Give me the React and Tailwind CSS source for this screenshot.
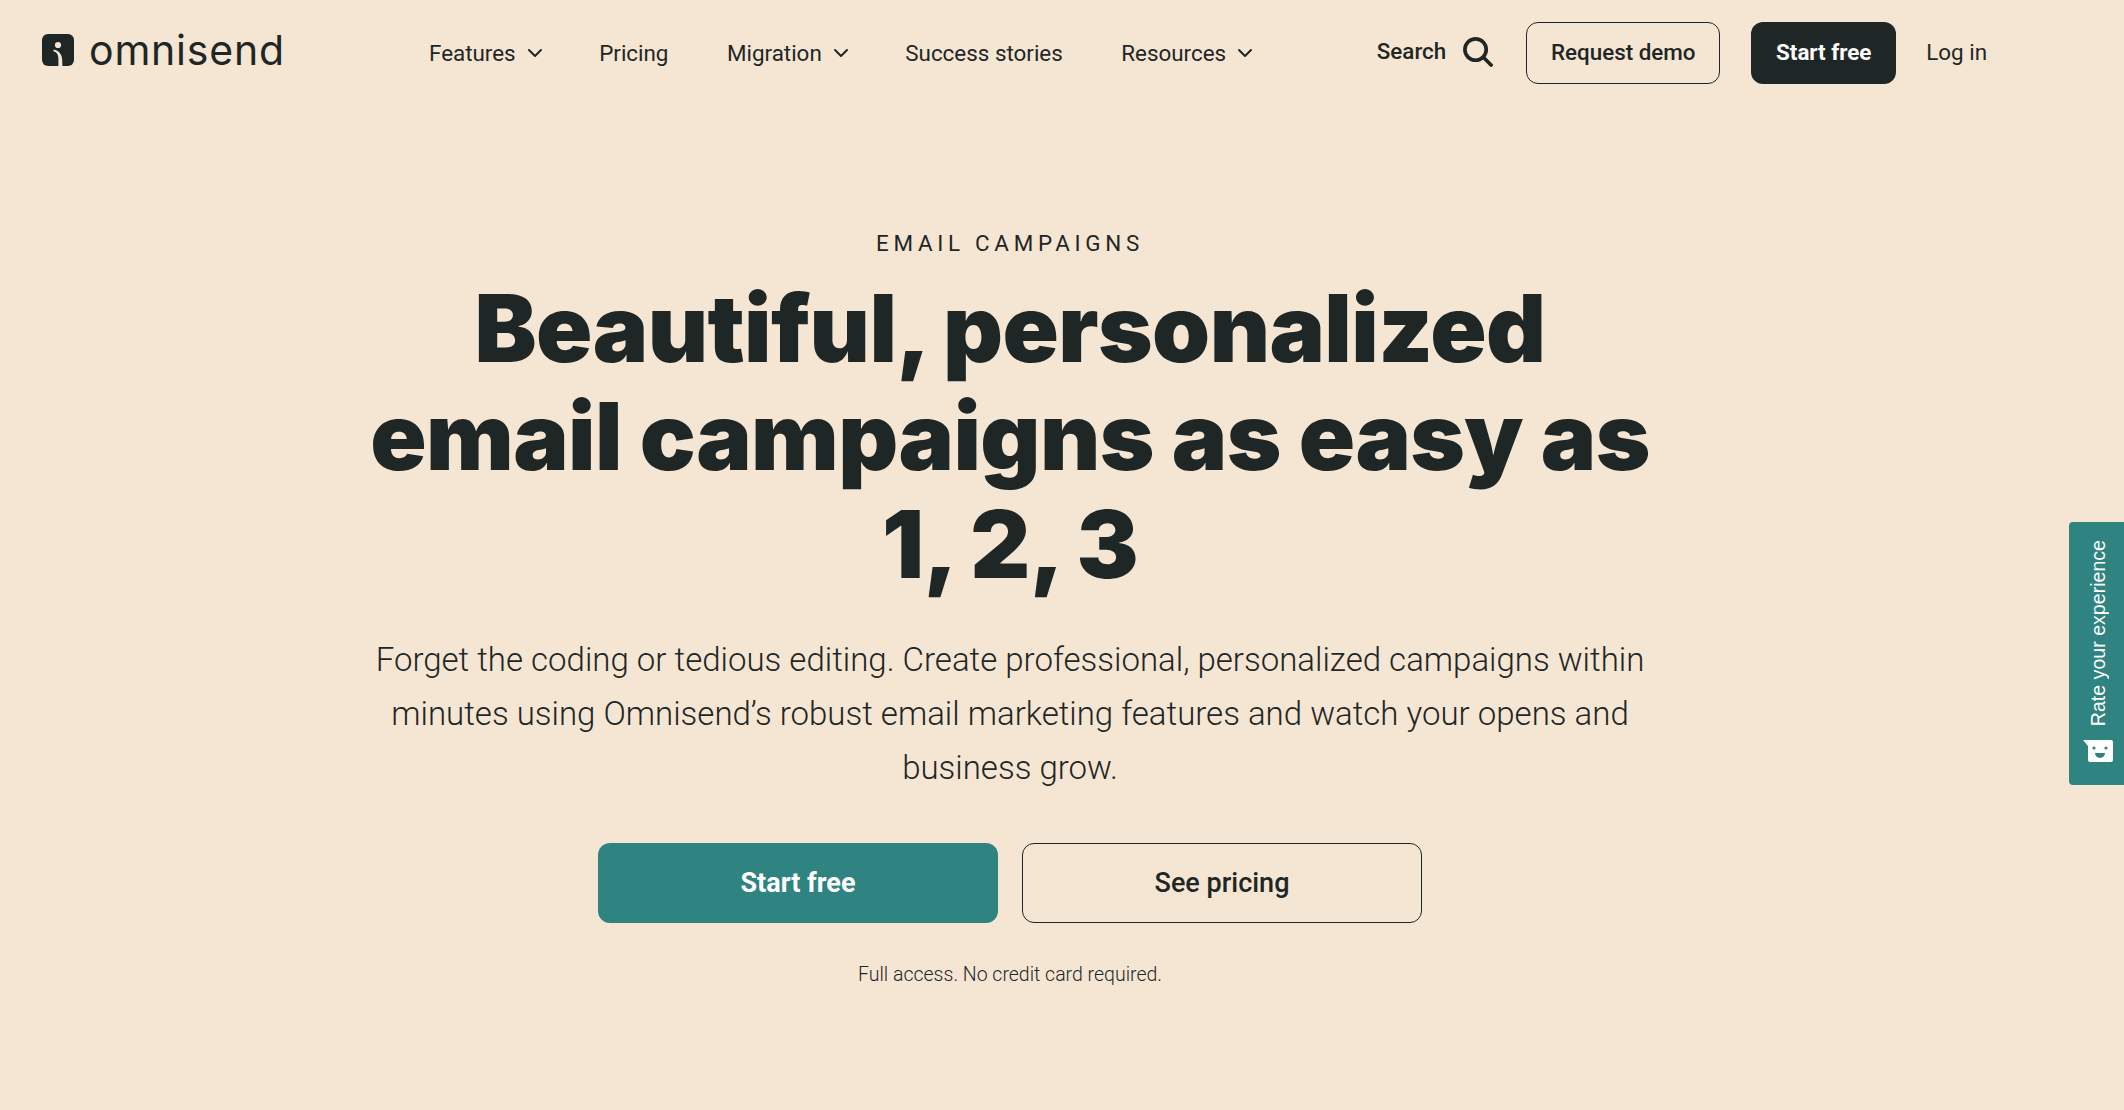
import { ChevronDown } from 'lucide-react';

const dark = '#1f2626';

const NavItem = ({ label, menu }) => (
  <a className="flex items-center text-[22.4px] leading-[30px] text-[#1f2626] font-normal">
    {label}
    {menu && <ChevronDown size={24} strokeWidth={2} className="ml-[7px] -mr-[6px]" />}
  </a>
);

const LogoMark = () => (
  <svg width="32" height="32" viewBox="0 0 32 32" className="shrink-0">
    <rect width="32" height="32" rx="6" fill={dark} />
    <circle cx="16" cy="11" r="3.1" fill="#f5e6d3" />
    <path d="M11.5 17.2 C15 18 16.4 21 16.4 25 L16.4 32 L20.4 32 L20.2 26 C20 20.5 17 16.4 11.5 15.6 Z" fill="#f5e6d3" />
  </svg>
);

const Header = () => (
  <header className="flex items-start pt-[22px] pl-[42px]">
    <div className="flex items-center gap-[15px] h-[56px]">
      <LogoMark />
      <span className="w-[192px] whitespace-nowrap font-['Inter',sans-serif] text-[41px] leading-[50px] font-normal tracking-[0.8px] text-[#1f2626]">omnisend</span>
    </div>
    <nav className="flex items-center gap-[58.5px] h-[62px] ml-[148px]">
      <NavItem label="Features" menu />
      <NavItem label="Pricing" />
      <NavItem label="Migration" menu />
      <NavItem label="Success stories" />
      <NavItem label="Resources" menu />
    </nav>
    <div className="flex items-center h-[62px] ml-auto mr-[137px]">
      <button className="flex items-center gap-[16px] -mt-[2px] text-[22.4px] font-medium text-[#1f2626] mr-[33px]">
        Search
        <svg width="31" height="31" viewBox="0 0 32 32" fill="none" stroke={dark} strokeWidth="3.8" strokeLinecap="round">
          <circle cx="14" cy="14" r="11" />
          <path d="M22 22 L30 30" />
        </svg>
      </button>
      <a className="flex items-center justify-center w-[194px] h-[62px] rounded-[12px] border border-[#1f2626] text-[22.4px] font-medium text-[#1f2626]">Request demo</a>
      <a className="flex items-center justify-center w-[145px] h-[62px] ml-[31px] rounded-[12px] bg-[#1f2626] text-[22.4px] font-bold text-white">Start free</a>
      <a className="ml-[30px] text-[22.4px] font-normal text-[#1f2626]">Log in</a>
    </div>
  </header>
);

const Hero = () => (
  <main className="w-[2020px] flex flex-col items-center pt-[143px] text-[#1f2626]">
    <p className="text-[22.4px] leading-[32px] font-normal tracking-[4.7px] uppercase">Email campaigns</p>
    <h1 className="mt-[15px] text-center font-['Inter',sans-serif] text-[93px] leading-[108px] font-black tracking-[-0.6px]">
      Beautiful, personalized<br />email campaigns as easy as<br />1, 2, 3
    </h1>
    <p className="mt-[35px] w-[1320px] text-center text-[33px] leading-[54px] font-light">
      Forget the coding or tedious editing. Create professional, personalized campaigns within minutes using Omnisend’s robust email marketing features and watch your opens and business grow.
    </p>
    <div className="flex gap-[24px] mt-[48px]">
      <a className="flex items-center justify-center w-[400px] h-[80px] rounded-[12px] bg-[#2f8380] text-[27px] font-bold text-white">Start free</a>
      <a className="flex items-center justify-center w-[400px] h-[80px] rounded-[12px] border border-[#1f2626] text-[27px] font-medium">See pricing</a>
    </div>
    <p className="mt-[38px] text-[19.5px] leading-[28px] font-light">Full access. No credit card required.</p>
  </main>
);

const RateWidget = () => (
  <div className="fixed right-0 top-[522px] w-[55px] h-[263px] rounded-l-[4px] bg-[#2f8380] flex flex-col items-center pt-[18px] pl-[2px]">
    <span className="font-['Liberation_Sans',sans-serif] text-[19.6px] leading-[24px] text-white [writing-mode:vertical-rl] rotate-180 whitespace-nowrap">Rate your experience</span>
    <svg width="30" height="23" viewBox="0 0 30 23" className="mt-[14px]">
      <path d="M0 0 L28 0 Q30 0 30 2 L30 20 Q30 22 28 22 L7 22 Q5 22 5 20 L5 6 Z" fill="#fff" />
      <circle cx="11" cy="8" r="1.6" fill="#2f8380" />
      <circle cx="23" cy="8" r="1.6" fill="#2f8380" />
      <path d="M12 13 H22 A5 5 0 0 1 12 13 Z" fill="#2f8380" />
    </svg>
  </div>
);

export default function App() {
  return (
    <div className="min-h-[1110px] bg-[#f5e6d3] font-['Roboto',sans-serif] overflow-hidden">
      <Header />
      <Hero />
      <RateWidget />
    </div>
  );
}
